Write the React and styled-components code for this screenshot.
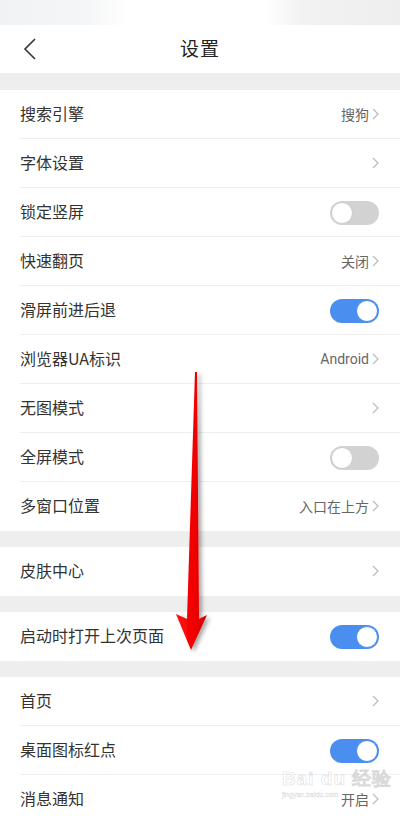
import React from "react";
import styled, { createGlobalStyle } from "styled-components";

const Global = createGlobalStyle`
  html, body { margin: 0; padding: 0; background: #eeeeee; }
  body { font-family: "Noto Sans CJK SC", "Noto Sans", sans-serif; }
  #root { width: 400px; }
`;

const Page = styled.div`
  position: relative;
  width: 400px;
  height: 816px;
  overflow: hidden;
  background: #eeeeee;
  display: flex;
  flex-direction: column;
`;

const StatusBar = styled.div`
  height: 25px;
  flex: none;
  background: linear-gradient(90deg, #f1f2f4 0%, #f5f6f7 22%, #ffffff 32%, #ffffff 66%, #f2f2f2 76%, #eeeeee 100%);
`;

const Header = styled.div`
  height: 48px;
  flex: none;
  background: #ffffff;
  display: flex;
  align-items: center;
  justify-content: center;
  position: relative;
`;

const BackButton = styled.div`
  position: absolute;
  left: 22px;
  top: 13px;
  width: 18px;
  height: 22px;
  display: flex;
  align-items: center;
`;

const Title = styled.div`
  font-size: 19px;
  line-height: 1;
  color: #222222;
  letter-spacing: 1px;
  padding-bottom: 3px;
`;

const Gap = styled.div`
  height: ${(p) => p.$h}px;
  flex: none;
`;

const Group = styled.div`
  background: #ffffff;
  flex: none;
  display: flex;
  flex-direction: column;
`;

const Row = styled.div`
  height: 49px;
  display: flex;
  align-items: center;
  padding: 0 21px 0 20px;
  position: relative;
  box-sizing: border-box;
  &:not(:last-child)::after {
    content: "";
    position: absolute;
    left: 20px;
    right: 0;
    bottom: 0;
    height: 1px;
    background: #efefef;
  }
`;

const Label = styled.div`
  flex: 1;
  font-size: 16px;
  line-height: 1;
  padding-bottom: 3px;
  color: #333333;
`;

const Value = styled.div`
  font-size: 14px;
  line-height: 1;
  color: #666666;
  display: flex;
  align-items: center;
  gap: 3px;
  padding-bottom: 2px;
  font-family: ${(p) => (p.$latin ? '"Roboto", "Noto Sans", sans-serif' : 'inherit')};
`;

const Track = styled.div`
  width: 49px;
  height: 24px;
  border-radius: 12px;
  background: ${(p) => (p.$on ? "#4a8ff0" : "#d2d2d2")};
  position: relative;
  box-sizing: border-box;
  display: flex;
  align-items: center;
  justify-content: ${(p) => (p.$on ? "flex-end" : "flex-start")};
  padding: 0 1px;
`;

const Knob = styled.div`
  width: 22px;
  height: 22px;
  border-radius: 50%;
  background: #ffffff;
  box-sizing: border-box;
  border: 1px solid ${(p) => (p.$on ? "#4a8ff0" : "#cccccc")};
`;

const Overlay = styled.svg`
  position: absolute;
  left: 0;
  top: 0;
  pointer-events: none;
`;

const Watermark = styled.div`
  position: absolute;
  left: 282px;
  top: 769px;
  display: flex;
  flex-direction: column;
  align-items: flex-start;
  color: rgba(255, 255, 255, 0.6);
  -webkit-text-stroke: 0.6px rgba(150, 150, 150, 0.35);
  pointer-events: none;
`;

const WmTop = styled.div`
  font-family: "Liberation Sans", sans-serif;
  font-size: 19px;
  font-weight: bold;
  line-height: 19px;
  letter-spacing: 1px;
`;

const WmBottom = styled.div`
  font-family: "Liberation Sans", sans-serif;
  font-size: 7px;
  line-height: 8px;
  margin-top: 3px;
  -webkit-text-stroke: 0.4px rgba(150, 150, 150, 0.35);
`;

const Chevron = () => (
  <svg width="7" height="12" viewBox="0 0 7 12">
    <path d="M1 1 L6 6 L1 11" fill="none" stroke="#bbbbbb" strokeWidth="1.2" />
  </svg>
);

const Toggle = ({ on }) => (
  <Track $on={on}>
    <Knob $on={on} />
  </Track>
);

const Item = ({ label, value, toggle, on, latin }) => (
  <Row>
    <Label>{label}</Label>
    {toggle ? (
      <Toggle on={on} />
    ) : (
      <Value $latin={latin}>
        {value}
        <Chevron />
      </Value>
    )}
  </Row>
);

export default function App() {
  return (
    <Page>
      <Global />
      <StatusBar />
      <Header>
        <BackButton>
          <svg width="16" height="22" viewBox="0 0 16 22">
            <path d="M13 1 L3 11 L13 21" fill="none" stroke="#333" strokeWidth="1.6" />
          </svg>
        </BackButton>
        <Title>设置</Title>
      </Header>
      <Gap $h={17} />
      <Group>
        <Item label="搜索引擎" value="搜狗" />
        <Item label="字体设置" value="" />
        <Item label="锁定竖屏" toggle on={false} />
        <Item label="快速翻页" value="关闭" />
        <Item label="滑屏前进后退" toggle on />
        <Item label="浏览器UA标识" value="Android" latin />
        <Item label="无图模式" value="" />
        <Item label="全屏模式" toggle on={false} />
        <Item label="多窗口位置" value="入口在上方" />
      </Group>
      <Gap $h={16} />
      <Group>
        <Item label="皮肤中心" value="" />
      </Group>
      <Gap $h={16} />
      <Group>
        <Item label="启动时打开上次页面" toggle on />
      </Group>
      <Gap $h={16} />
      <Group>
        <Item label="首页" value="" />
        <Item label="桌面图标红点" toggle on />
        <Item label="消息通知" value="开启" />
      </Group>
      <Overlay width="400" height="816" viewBox="0 0 400 816">
        <defs>
          <linearGradient id="red" x1="0" x2="1" y1="0" y2="0">
            <stop offset="0" stopColor="#ff1010" />
            <stop offset="0.6" stopColor="#f00000" />
            <stop offset="1" stopColor="#c80000" />
          </linearGradient>
          <filter id="sh" x="-50%" y="-10%" width="200%" height="120%">
            <feDropShadow dx="3" dy="2" stdDeviation="2" floodColor="#000" floodOpacity="0.35" />
          </filter>
        </defs>
        <polygon
          points="195,372 197,372 199,619 207,615 191,650 176,614 187,619"
          fill="url(#red)"
          filter="url(#sh)"
        />
      </Overlay>
      <Watermark>
        <WmTop>Bai du 经验</WmTop>
        <WmBottom>jingyan.baidu.com</WmBottom>
      </Watermark>
    </Page>
  );
}
